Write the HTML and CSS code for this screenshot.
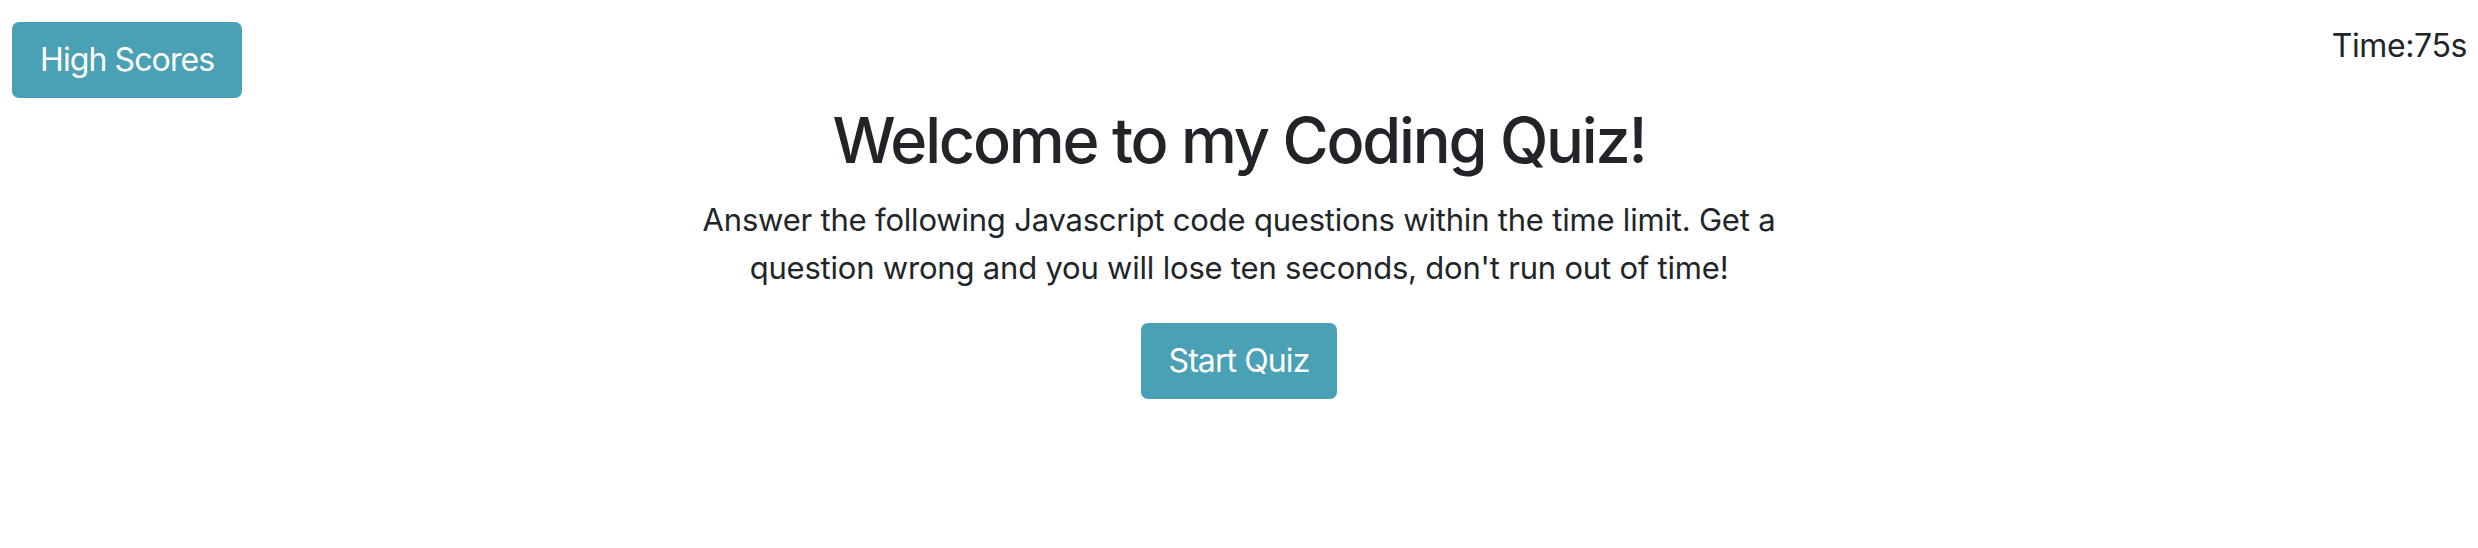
FILE: index.html
```html
<!DOCTYPE html>
<html lang="en">
<head>
<meta charset="utf-8">
<title>Coding Quiz</title>
<link rel="stylesheet" href="styles.css">
</head>
<body>
  <header class="top-bar">
    <button class="btn btn-info" type="button">High Scores</button>
    <div class="timer">Time:75s</div>
  </header>
  <main class="intro">
    <h1 class="intro-title">Welcome to my Coding Quiz!</h1>
    <p class="intro-text">Answer the following Javascript code questions within the time limit. Get a question wrong and you will lose ten seconds, don't run out of time!</p>
    <button class="btn btn-info" type="button">Start Quiz</button>
  </main>
</body>
</html>
```

FILE: styles.css
```css
html, body {
  margin: 0;
  padding: 0;
  background: #ffffff;
}

body {
  font-family: Inter, "Noto Sans", "Liberation Sans", sans-serif;
  color: #212529;
}

.top-bar {
  display: flex;
  justify-content: space-between;
  align-items: flex-start;
  padding: 22px 11px 0 12px;
}

.timer {
  font-size: 32px;
  line-height: 48px;
  letter-spacing: -0.4px;
  color: #212529;
}

.btn {
  font-family: inherit;
  font-size: 32px;
  line-height: 48px;
  font-weight: 400;
  letter-spacing: -0.9px;
  color: #ffffff;
  background: #4aa1b5;
  border: 2px solid #4aa1b5;
  border-radius: 7px;
  padding: 12px 26px;
  cursor: pointer;
}

.intro {
  display: flex;
  flex-direction: column;
  align-items: center;
  text-align: center;
}

.intro-title {
  margin: 4px 0 17px;
  font-size: 63px;
  line-height: 77px;
  font-weight: 500;
  letter-spacing: -2.2px;
  color: #212529;
}

.intro-text {
  margin: 0 0 31px;
  max-width: 1140px;
  font-size: 31px;
  line-height: 48px;
  letter-spacing: -0.2px;
}
```
